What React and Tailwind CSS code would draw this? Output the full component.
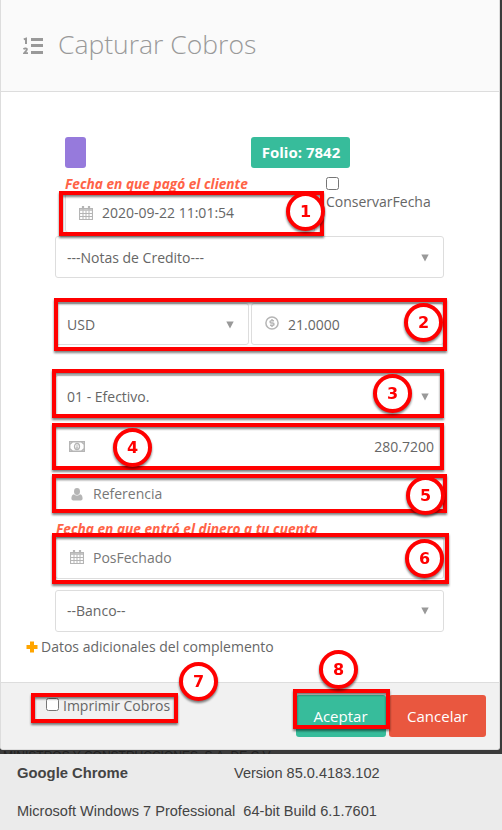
import React, { useState } from 'react';
import { clsx } from 'clsx';

const BOXES = [
  { id: 'fecha', pos: 'left-[59px] top-[191px] w-[265px] h-[45px]' },
  { id: 'moneda', pos: 'left-[54px] top-[298px] w-[393px] h-[53px]' },
  { id: 'forma', pos: 'left-[52px] top-[369px] w-[392px] h-[49px]' },
  { id: 'monto', pos: 'left-[52px] top-[423px] w-[392px] h-[47px]' },
  { id: 'referencia', pos: 'left-[52px] top-[474px] w-[395px] h-[39px]' },
  { id: 'posfechado', pos: 'left-[52px] top-[533px] w-[397px] h-[51px]' },
  { id: 'imprimir', pos: 'left-[31px] top-[693px] w-[147px] h-[30px]' },
  { id: 'aceptar', pos: 'left-[293px] top-[689px] w-[97px] h-[40px]' },
];

const MARKS = [
  { n: 1, pos: 'left-[286px] top-[192px]' },
  { n: 2, pos: 'left-[404px] top-[303px]' },
  { n: 3, pos: 'left-[373px] top-[374px]' },
  { n: 4, pos: 'left-[113px] top-[428px]' },
  { n: 5, pos: 'left-[406px] top-[476px]' },
  { n: 6, pos: 'left-[405px] top-[539px]' },
  { n: 7, pos: 'left-[179px] top-[662px]' },
  { n: 8, pos: 'left-[319px] top-[650px]' },
];

const ListIcon = () => (
  <svg width="21" height="19" viewBox="0 0 21 19" fill="none" stroke="#999">
    <path d="M8 3.500h12M8 9.500h12M8 16.500h12" strokeWidth="3.200" />
    <path d="M.8 3.400L3 2.600V8" strokeWidth="2" />
    <path d="M.5 13.300c1-1.400 3.700-1.100 3.300.3C3.500 14.900 2 16 1.300 17.100H5" strokeWidth="1.900" />
  </svg>
);

const CalendarIcon = () => (
  <svg width="14" height="14" viewBox="0 0 14 14" fill="none" stroke="#b5b5b5">
    <path d="M.5 2.500h13v11H.5z" strokeWidth="1.200" />
    <path d="M.5 4h13" strokeWidth="1.400" />
    <path d="M.5 7.500h13M.5 10.500h13M4 4.500v9M7 4.500v9M10 4.500v9" />
    <path d="M4 0v3.500M10 0v3.500" strokeWidth="2.200" />
  </svg>
);

const CoinIcon = () => (
  <svg width="14" height="14" viewBox="0 0 14 14" fill="none" stroke="#b5b5b5">
    <circle cx="7" cy="7" r="6.100" strokeWidth="1.500" />
    <path d="M9 4.700H6.300C4.600 4.700 4.600 7 6.300 7h1.400c1.700 0 1.700 2.300 0 2.300H5M7 3v1.500M7 9.500V11" strokeWidth="1.500" />
  </svg>
);

const BillIcon = () => (
  <svg width="16" height="11" viewBox="0 0 16 11" fill="none" stroke="#b5b5b5">
    <path d="M.7 .7h14.600v9.600H.7z" strokeWidth="1.400" />
    <path d="M1 3.200L3.400 1M12.600 1L15 3.200M1 7.800L3.400 10M12.600 10L15 7.800" strokeWidth="1.300" />
    <ellipse cx="8" cy="5.500" rx="2.500" ry="3" strokeWidth="1.300" />
    <path d="M8 4v3.200M7 7h2" />
  </svg>
);

const UserIcon = () => (
  <svg width="12" height="13" viewBox="0 0 12 13" fill="#b5b5b5">
    <ellipse cx="6" cy="3.500" rx="3" ry="3.400" />
    <path d="M3 6.200C1 6.600 .4 8.600 .4 10.600c0 1.300.8 1.900 2 1.900h7.200c1.200 0 2-.6 2-1.900 0-2-.6-4-2.600-4.400C7.500 7.900 4.500 7.900 3 6.200z" />
  </svg>
);

const Select = ({ text, className }) => (
  <div className={clsx('flex h-[42px] items-center justify-between rounded-[3px] border border-[#ddd] bg-white pl-[11px] pr-[14px]', className)}>
    <span>{text}</span>
    <svg width="8" height="8" viewBox="0 0 8 8" fill="#999"><path d="M.3 .5h7.400L4 7.500z" /></svg>
  </div>
);

const Field = ({ icon, text, className }) => (
  <div className={clsx('flex items-center rounded-[3px] border border-[#ddd] bg-white', className)}>
    {icon}
    <span>{text}</span>
  </div>
);

const Hint = ({ children, className }) => (
  <div className={clsx('whitespace-nowrap text-[13.7px] font-bold italic leading-[18px] text-[#ff6347]', className)}>{children}</div>
);

const Check = ({ checked, onChange }) => (
  <button
    onClick={onChange}
    className={clsx('block h-[13px] w-[13px] shrink-0 rounded-[2.5px] border border-[#767676]', checked ? 'bg-blue-500' : 'bg-white')}
  />
);

const App = () => {
  const [keepDate, setKeepDate] = useState(false);
  const [print, setPrint] = useState(false);

  return (
    <div className="relative h-[830px] w-[502px] overflow-hidden bg-[#3a3a3a] font-['Open_Sans',sans-serif] text-[14px] leading-5 text-[#666]">
      <div className="flex h-[750px] w-[500px] flex-col overflow-hidden rounded-b-[3px] border border-t-0 border-[#ddd] bg-white">
        <header className="flex h-[92px] shrink-0 items-center border-b border-[#ddd] bg-[#fafafa] pl-[22px]">
          <ListIcon />
          <h1 className="ml-[14px] -mt-[3px] whitespace-nowrap text-[26.5px] font-light leading-9 text-[#999]">Capturar Cobros</h1>
        </header>

        <main className="flex h-[590px] shrink-0 flex-col pl-[54px] pr-[55px] pt-[45px]">
          <div className="flex h-[31px] pl-[10px]">
            <div className="w-[21px] rounded-[3px] bg-[#967adc]" />
            <div className="ml-[165px] flex w-[99px] items-center justify-center rounded-[3px] bg-[#37bc9b] pb-[2px] pl-px text-[15px] font-bold text-white">Folio: 7842</div>
          </div>

          <div className="flex h-[68px]">
            <div className="w-[260px] pl-[10px] pt-[7px]">
              <Hint>Fecha en que pagó el cliente</Hint>
              <Field icon={<span className="ml-[13px] mr-[9px]"><CalendarIcon /></span>} text="2020-09-22 11:01:54" className="h-[40px]" />
            </div>
            <div className="ml-[11px] pt-[9px]">
              <Check checked={keepDate} onChange={() => setKeepDate(!keepDate)} />
              <div className="mt-[2px]">ConservarFecha</div>
            </div>
          </div>

          <Select text="---Notas de Credito---" className="pt-px" />

          <div className="mt-[25px] flex gap-[2px]">
            <Select text="USD" className="w-[194px] pt-px" />
            <Field icon={<span className="ml-[13px] mr-[9px] -mt-[3px]"><CoinIcon /></span>} text="21.0000" className="h-[42px] w-[193px] pt-px" />
          </div>

          <Select text="01 - Efectivo." className="mt-[30px] pt-px" />

          <div className="mt-[9px] flex h-[42px] items-center justify-between rounded-[3px] border border-[#ddd] bg-white pl-[13px] pr-[9px]">
            <div className="-mt-px"><BillIcon /></div>
            <span>280.7200</span>
          </div>

          <Field icon={<span className="ml-[15px] mr-[10px]"><UserIcon /></span>} text="Referencia" className="mt-[7px] h-[38px] text-[#777]" />

          <Hint className="mt-[6px] pl-px pt-px">Fecha en que entró el dinero a tu cuenta</Hint>
          <Field icon={<span className="ml-[14px] mr-[9px] -mt-[2px]"><CalendarIcon /></span>} text="PosFechado" className="-mt-px h-[42px] text-[#777]" />

          <Select text="--Banco--" className="mt-[11px]" />

          <div className="-ml-[29px] mt-[5px] flex items-center">
            <svg width="12" height="12" viewBox="0 0 12 12" fill="orange"><path d="M4 .5h4V4h3.500v4H8v3.500H4V8H.5V4H4z" /></svg>
            <span className="ml-[3px]">Datos adicionales del complemento</span>
          </div>
        </main>

        <footer className="flex flex-1 items-start justify-between border-t border-[#ddd] bg-[#f1f1f1] pl-[45px] pr-[13px]">
          <label className="flex items-start pt-[15px]">
            <Check checked={print} onChange={() => setPrint(!print)} />
            <span className="-mt-[2px] ml-[4px]">Imprimir Cobros</span>
          </label>
          <div className="flex gap-[3px] pt-[12px]">
            <button className="h-[42px] w-[90px] rounded-[3px] bg-[#37bc9b] pr-px text-[15px] text-white">Aceptar</button>
            <button className="h-[42px] w-[97px] rounded-[3px] bg-[#e9573f] text-[15px] text-white">Cancelar</button>
          </div>
        </footer>
      </div>

      {/* strip of the page that shows under the modal */}
      <div className="h-[4px] overflow-hidden whitespace-nowrap pl-[3px] font-['Liberation_Sans',Arial,sans-serif] text-[12px] leading-[12px] text-[#202020]">
        <div>MINISTROS Y CONSTRUCCIONES, S.A. DE C.V.</div>
      </div>

      <div className="h-[76px] bg-[#ebebeb] pl-[17px] pt-[10px] font-['Liberation_Sans',Arial,sans-serif] text-[14.55px] leading-[18px] text-[#444]">
        <div className="flex">
          <span className="w-[217px] text-[14.8px] font-bold">Google Chrome</span>
          <span>Version 85.0.4183.102</span>
        </div>
        <div className="mt-[20px] whitespace-pre">Microsoft Windows 7 Professional  64-bit Build 6.1.7601</div>
      </div>

      {/* step callouts over the form */}
      {BOXES.map((b) => (
        <div key={b.id} className={clsx('pointer-events-none absolute', b.pos)}>
          <div className="h-full w-full border-4 border-[#f00] drop-shadow-[0_2px_1px_rgba(0,0,0,0.5)]" />
        </div>
      ))}
      {MARKS.map((m) => (
        <div
          key={m.n}
          className={clsx("pointer-events-none absolute flex h-[39px] w-[39px] items-center justify-center rounded-full border-4 border-[#f00] bg-white font-['DejaVu_Sans',sans-serif] text-[16px] font-bold text-[#f00] drop-shadow-[0_2px_1px_rgba(0,0,0,0.5)]", m.pos)}
        >
          {m.n}
        </div>
      ))}
    </div>
  );
};

export default App;
